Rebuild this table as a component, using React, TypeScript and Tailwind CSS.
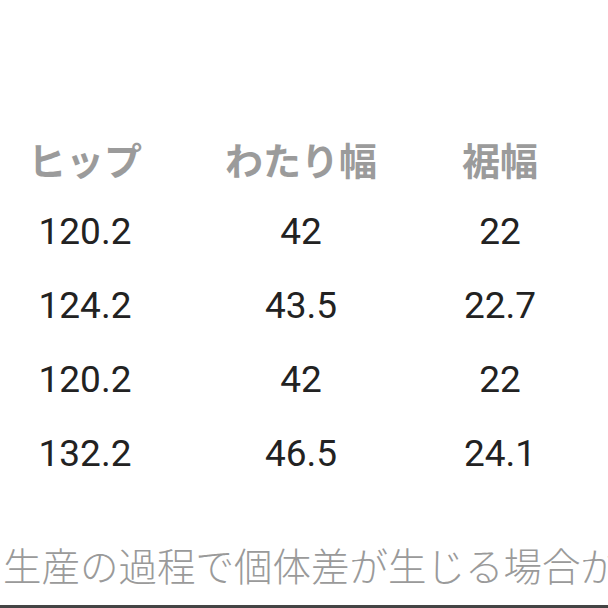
import React from "react";

const rows = [
  ["120.2", "42", "22"],
  ["124.2", "43.5", "22.7"],
  ["120.2", "42", "22"],
  ["132.2", "46.5", "24.1"],
];

export default function App() {
  return (
    <div className="w-[608px] h-[608px] bg-white overflow-hidden flex flex-col">
      <div className="pt-[121px] flex flex-col">
        <div
          className="grid grid-cols-[170px_262px_136px] h-[74px] items-center text-[38px] font-bold text-[#9b9b9b]"
          style={{ fontFamily: '"Noto Sans CJK JP", "Noto Sans", sans-serif' }}
        >
          <div className="text-center">ヒップ</div>
          <div className="text-center">わたり幅</div>
          <div className="text-center">裾幅</div>
        </div>
        {rows.map((r, i) => (
          <div
            key={i}
            className="grid grid-cols-[170px_262px_136px] h-[74px] items-center text-[37px] text-[#222222]"
            style={{ fontFamily: 'Roboto, "Noto Sans", sans-serif' }}
          >
            <div className="text-center">{r[0]}</div>
            <div className="text-center">{r[1]}</div>
            <div className="text-center">{r[2]}</div>
          </div>
        ))}
      </div>
      <div
        className="mt-[47px] pl-[3px] whitespace-nowrap text-[38.5px] leading-[52px] font-light text-[#9a9a9a]"
        style={{ fontFamily: '"Noto Sans CJK JP", sans-serif' }}
      >
        生産の過程で個体差が生じる場合が
      </div>
      <div className="mt-auto h-[3px] bg-[#444444]" />
    </div>
  );
}
